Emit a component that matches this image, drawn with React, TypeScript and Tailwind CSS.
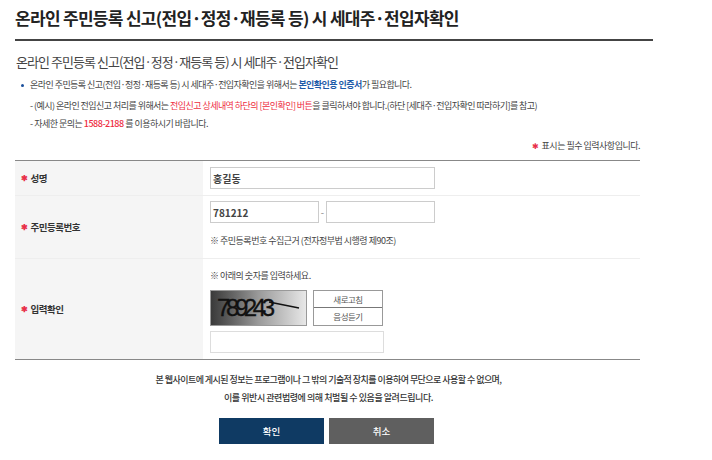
const font = { fontFamily: '"Noto Sans CJK KR", "Noto Sans", sans-serif' }

function Star() {
  return <span className="text-[#e8304a] text-[8px] leading-none mr-[3px]">✱</span>
}

function Label({ text }: { text: string }) {
  return (
    <div className="w-[188px] shrink-0 bg-[#f5f5f5] flex items-center pl-[6px] text-[9.5px] font-bold tracking-[-0.5px] text-[#333]">
      <Star />
      {text}
    </div>
  )
}

function Captcha() {
  return (
    <div className="relative w-[97px] h-[36px] bg-gradient-to-r from-[#3a3a3a] via-[#9a9a9a] to-[#e8e8e8] border border-[#999] overflow-hidden">
      <span className="absolute left-[6px] top-[2px] text-[24px] leading-[30px] tracking-[-4.4px] text-[#111] [-webkit-text-stroke:0.3px_#111] font-['Liberation_Sans',sans-serif]">
        789243
      </span>
      <svg className="absolute left-0 top-0" width="97" height="36">
        <path d="M58 11 L88 17" stroke="#111" strokeWidth="1.4" fill="none" />
      </svg>
    </div>
  )
}

export default function App() {
  return (
    <div className="w-[712px] h-[460px] overflow-hidden bg-white text-[#444]" style={font}>
      <div className="ml-[15px] w-[638px] h-[41px] border-b-2 border-[#444] flex items-center pb-[3px]">
        <h1 className="text-[17px] font-bold tracking-[-0.7px] text-[#222] whitespace-nowrap">
          온라인 주민등록 신고(전입·정정·재등록 등) 시 세대주·전입자확인
        </h1>
      </div>

      <div className="ml-[16px] mt-[11px] text-[13px] leading-[20px] tracking-[-0.95px] text-[#444] whitespace-nowrap">
        온라인 주민등록 신고(전입·정정·재등록 등) 시 세대주·전입자확인
      </div>

      <div className="ml-[21px] mt-[5px] flex items-center text-[9px] leading-[16px] tracking-[-0.55px] whitespace-nowrap">
        <span className="w-[3px] h-[3px] rounded-full bg-[#1a4f9c] mr-[6px]" />
        온라인 주민등록 신고(전입·정정·재등록 등) 시 세대주·전입자확인을 위해서는&nbsp;
        <b className="text-[#1c5aa8]">본인확인용 인증서</b>가 필요합니다.
      </div>

      <div className="ml-[30px] mt-[4px] text-[9px] leading-[18px] tracking-[-0.5px] whitespace-nowrap">
        <div className="tracking-[-0.55px]">
          - (예시) 온라인 전입신고 처리를 위해서는&nbsp;
          <span className="text-[#ee2d3f]">전입신고 상세내역 하단의 [본인확인] 버튼</span>을 클릭하셔야 합니다.(하단 [세대주·전입자확인 따라하기]를 참고)
        </div>
        <div>
          - 자세한 문의는 <span className="text-[#ee2d3f] font-medium">1588-2188</span> 를 이용하시기 바랍니다.
        </div>
      </div>

      <div className="w-[640px] mt-[3px] h-[20px] flex items-center justify-end text-[9px] tracking-[-0.5px] whitespace-nowrap">
        <Star />
        표시는 필수 입력사항입니다.
      </div>

      <div className="ml-[15px] w-[625px] mt-[4px] border-t border-[#888] border-b text-[9.5px]">
        <div className="flex h-[35px] border-b border-[#eeeeee]">
          <Label text="성명" />
          <div className="flex items-center pl-[7px]">
            <div className="w-[225px] h-[22px] border border-[#ccc] flex items-center pl-[2px] font-bold text-[10px] text-[#444]">
              홍길동
            </div>
          </div>
        </div>
        <div className="flex h-[63px] border-b border-[#eeeeee]">
          <Label text="주민등록번호" />
          <div className="pl-[7px] pt-[5px]">
            <div className="flex items-center">
              <div className="w-[109px] h-[22px] border border-[#ccc] flex items-center pl-[2px] font-bold text-[10px] text-[#444]">
                781212
              </div>
              <span className="w-[7px] text-center text-[#888]">-</span>
              <div className="w-[109px] h-[22px] border border-[#ccc]" />
            </div>
            <div className="mt-[11px] text-[9px] leading-[14px] tracking-[-0.5px] whitespace-nowrap">
              ※ 주민등록번호 수집근거 (전자정부법 시행령 제90조)
            </div>
          </div>
        </div>
        <div className="flex h-[100px]">
          <Label text="입력확인" />
          <div className="pl-[7px] pt-[10px]">
            <div className="text-[9px] leading-[14px] tracking-[-0.5px] whitespace-nowrap">
              ※ 아래의 숫자를 입력하세요.
            </div>
            <div className="mt-[7px] flex">
              <Captcha />
              <div className="ml-[6px] w-[70px] h-[36px] border border-[#999] flex flex-col text-[8.5px] tracking-[-0.5px] text-[#555]">
                <div className="h-[17px] flex items-center justify-center border-b border-[#777]">새로고침</div>
                <div className="flex-1 flex items-center justify-center">음성듣기</div>
              </div>
            </div>
            <div className="mt-[5px] w-[174px] h-[22px] border border-[#ddd]" />
          </div>
        </div>
      </div>

      <div className="w-[657px] mt-[11px] text-center text-[9px] leading-[18px] font-medium tracking-[-0.55px] text-[#333] whitespace-nowrap">
        <div>본 웹사이트에 게시된 정보는 프로그램이나 그 밖의 기술적 장치를 이용하여 무단으로 사용할 수 없으며,</div>
        <div className="tracking-[-0.45px]">이를 위반시 관련법령에 의해 처벌될 수 있음을 알려드립니다.</div>
      </div>

      <div className="ml-[219px] mt-[11px] flex gap-[5px]">
        <button type="button" className="w-[105px] h-[26px] bg-[#0f3a63] text-white text-[9.5px] font-medium">확인</button>
        <button type="button" className="w-[105px] h-[26px] bg-[#5f5f5f] text-white text-[9.5px] font-medium">취소</button>
      </div>
    </div>
  )
}
